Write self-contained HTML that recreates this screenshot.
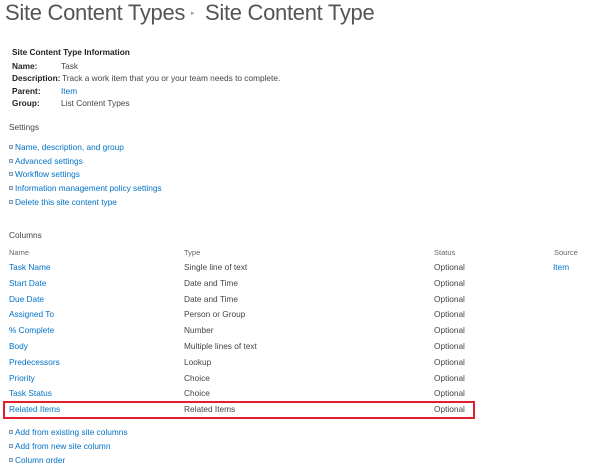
<!DOCTYPE html>
<html><head><meta charset="utf-8"><style>
body{margin:0;width:600px;height:472px;background:#fff;position:relative;overflow:hidden;font-family:"Liberation Sans",sans-serif;font-size:8.3px;color:#444;}
div{position:absolute;white-space:nowrap;line-height:11px;}
.a{color:#0072c6;}
.b{font-weight:bold;color:#222;}
.h{color:#666;font-size:7.5px;}
.t{font-size:22px;line-height:26px;color:#555;top:0;letter-spacing:-0.3px;}
.bl{width:2px;height:2px;border:1px solid #8a9bb0;background:#dde4ee;}
.box{border:2px solid #e0202c;left:3px;top:401px;width:468px;height:14px;}
</style></head><body>
<div class="t" style="left:5px">Site Content Types</div>
<div style="left:191px;top:8px;color:#999;font-size:7px">&#9656;</div>
<div class="t" style="left:205px">Site Content Type</div>

<div class="b" style="left:12px;top:47px">Site Content Type Information</div>
<div class="b" style="left:12px;top:61px">Name:</div><div style="left:61px;top:61px">Task</div>
<div class="b" style="left:12px;top:73px">Description:</div><div style="left:62px;top:73px">Track a work item that you or your team needs to complete.</div>
<div class="b" style="left:12px;top:86px">Parent:</div><div class="a" style="left:61px;top:86px">Item</div>
<div class="b" style="left:12px;top:98px">Group:</div><div style="left:61px;top:98px">List Content Types</div>

<div style="left:9px;top:122px">Settings</div>
<div class="bl" style="left:9px;top:145px"></div><div class="a" style="left:15px;top:142px">Name, description, and group</div>
<div class="bl" style="left:9px;top:159px"></div><div class="a" style="left:15px;top:156px">Advanced settings</div>
<div class="bl" style="left:9px;top:172px"></div><div class="a" style="left:15px;top:169px">Workflow settings</div>
<div class="bl" style="left:9px;top:186px"></div><div class="a" style="left:15px;top:183px">Information management policy settings</div>
<div class="bl" style="left:9px;top:200px"></div><div class="a" style="left:15px;top:197px">Delete this site content type</div>

<div style="left:9px;top:230px">Columns</div>
<div class="h" style="left:9px;top:247px">Name</div><div class="h" style="left:184px;top:247px">Type</div><div class="h" style="left:434px;top:247px">Status</div><div class="h" style="left:554px;top:247px">Source</div>

<div class="a" style="left:9px;top:262px">Task Name</div><div style="left:184px;top:262px">Single line of text</div><div style="left:434px;top:262px">Optional</div><div class="a" style="left:553px;top:262px">Item</div>
<div class="a" style="left:9px;top:278px">Start Date</div><div style="left:184px;top:278px">Date and Time</div><div style="left:434px;top:278px">Optional</div>
<div class="a" style="left:9px;top:294px">Due Date</div><div style="left:184px;top:294px">Date and Time</div><div style="left:434px;top:294px">Optional</div>
<div class="a" style="left:9px;top:309px">Assigned To</div><div style="left:184px;top:309px">Person or Group</div><div style="left:434px;top:309px">Optional</div>
<div class="a" style="left:9px;top:325px">% Complete</div><div style="left:184px;top:325px">Number</div><div style="left:434px;top:325px">Optional</div>
<div class="a" style="left:9px;top:341px">Body</div><div style="left:184px;top:341px">Multiple lines of text</div><div style="left:434px;top:341px">Optional</div>
<div class="a" style="left:9px;top:357px">Predecessors</div><div style="left:184px;top:357px">Lookup</div><div style="left:434px;top:357px">Optional</div>
<div class="a" style="left:9px;top:373px">Priority</div><div style="left:184px;top:373px">Choice</div><div style="left:434px;top:373px">Optional</div>
<div class="a" style="left:9px;top:388px">Task Status</div><div style="left:184px;top:388px">Choice</div><div style="left:434px;top:388px">Optional</div>
<div class="box"></div>
<div class="a" style="left:9px;top:404px">Related Items</div><div style="left:184px;top:404px">Related Items</div><div style="left:434px;top:404px">Optional</div>

<div class="bl" style="left:9px;top:430px"></div><div class="a" style="left:15px;top:427px">Add from existing site columns</div>
<div class="bl" style="left:9px;top:444px"></div><div class="a" style="left:15px;top:441px">Add from new site column</div>
<div class="bl" style="left:9px;top:458px"></div><div class="a" style="left:15px;top:455px">Column order</div>
</body></html>
